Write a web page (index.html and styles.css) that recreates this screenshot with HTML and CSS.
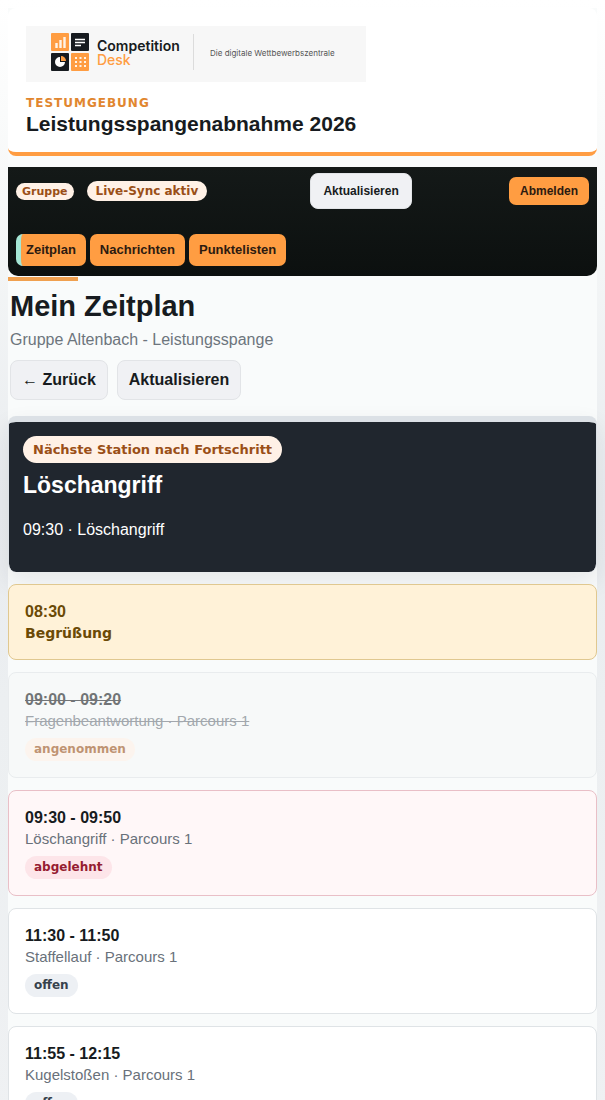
FILE: index.html
```html
<!DOCTYPE html>
<html lang="de">
<head>
    <meta charset="utf-8">
    <meta name="viewport" content="width=device-width, initial-scale=1">
    <link rel="stylesheet" href="styles.css">
    <title>Mein Zeitplan - Competition Desk</title>
</head>
<body>
    <div class="page">
        <header class="event-header">
            <div class="brand">
                <svg class="brand-mark" viewBox="0 0 38 38" aria-hidden="true">
                    <rect width="18" height="18" rx="1" fill="#ff9d42"/>
                    <rect x="20" width="18" height="18" rx="1" fill="#171b20"/>
                    <rect y="20" width="18" height="18" rx="1" fill="#171b20"/>
                    <rect x="20" y="20" width="18" height="18" rx="1" fill="#ff9d42"/>
                    <path d="M5.500 15V10M9.500 15V7M13.500 15V4" stroke="#fff4e8" stroke-width="2.400"/>
                    <path d="M24 6.500h10M24 9.500h10M24 12.500h6" stroke="#fff" stroke-width="1.400"/>
                    <path d="M9 24v5h5a5 5 0 1 1-5-5z" fill="#fff"/>
                    <path d="M10 23a5 5 0 0 1 5 5h-5z" fill="#ff9d42"/>
                    <path d="M24 25h11M24 29h11M24 33h11" stroke="#fff4e8" stroke-width="2" stroke-dasharray="2 2.500"/>
                </svg>
                <div class="brand-name">Competition<span>Desk</span></div>
                <div class="brand-claim">Die digitale Wettbewerbszentrale</div>
            </div>
            <div class="environment">TESTUMGEBUNG</div>
            <div class="event-title">Leistungsspangenabnahme 2026</div>
        </header>

        <nav class="topbar">
            <div class="topbar-row">
                <div class="status">
                    <span class="pill pill-role">Gruppe</span>
                    <span class="pill pill-sync">Live-Sync aktiv</span>
                </div>
                <button type="button" class="btn btn-small">Aktualisieren</button>
                <button type="button" class="btn-logout">Abmelden</button>
            </div>
            <div class="tabs">
                <a href="#zeitplan" class="tab active">Zeitplan</a>
                <a href="#nachrichten" class="tab">Nachrichten</a>
                <a href="#punktelisten" class="tab">Punktelisten</a>
            </div>
        </nav>

        <main id="zeitplan">
            <div class="page-head">
                <h1>Mein Zeitplan</h1>
                <p class="subtitle">Gruppe Altenbach - Leistungsspange</p>
                <div class="actions">
                    <button type="button" class="btn">← Zurück</button>
                    <button type="button" class="btn">Aktualisieren</button>
                </div>
            </div>

            <section class="next-station">
                <span class="pill pill-next">Nächste Station nach Fortschritt</span>
                <h2>Löschangriff</h2>
                <p>09:30 · Löschangriff</p>
            </section>

            <div class="schedule">
                <article class="slot slot-general">
                    <div class="time">08:30</div>
                    <div class="general-title">Begrüßung</div>
                </article>
                <article class="slot slot-done">
                    <div class="time">09:00 - 09:20</div>
                    <div class="station">Fragenbeantwortung · Parcours 1</div>
                    <span class="badge badge-accepted">angenommen</span>
                </article>
                <article class="slot slot-rejected">
                    <div class="time">09:30 - 09:50</div>
                    <div class="station">Löschangriff · Parcours 1</div>
                    <span class="badge badge-rejected">abgelehnt</span>
                </article>
                <article class="slot">
                    <div class="time">11:30 - 11:50</div>
                    <div class="station">Staffellauf · Parcours 1</div>
                    <span class="badge">offen</span>
                </article>
                <article class="slot">
                    <div class="time">11:55 - 12:15</div>
                    <div class="station">Kugelstoßen · Parcours 1</div>
                    <span class="badge">offen</span>
                </article>
            </div>
        </main>
    </div>
</body>
</html>
```

FILE: styles.css
```css
* {
    box-sizing: border-box;
}

body {
    margin: 0;
    padding: 8px;
    font-family: "Liberation Sans", Arial, sans-serif;
    font-size: 16px;
    color: #171b20;
    background: linear-gradient(#ffffff 0, #f6f8f8 200px, #e9ecef 500px, #eceff1 700px, #eff1f3 100%);
}

h1, h2, p {
    margin: 0;
}

button {
    font-family: inherit;
    cursor: pointer;
}

.page {
    background: #f9fbfb;
}

/* header */

.event-header {
    padding: 18px 18px 16px;
    background: #fff;
    border-bottom: 4px solid #ff9d42;
    border-radius: 8px;
}

.brand {
    display: flex;
    align-items: center;
    max-width: 340px;
    height: 56px;
    padding: 0 25px;
    background: #f7f7f7;
}

.brand-mark {
    flex-shrink: 0;
    width: 38px;
    height: 38px;
    margin-bottom: 4px;
}

.brand-name {
    width: 96px;
    margin-bottom: 2px;
    padding-left: 8px;
    font-family: Inter, sans-serif;
    font-size: 14px;
    line-height: 14px;
    font-weight: 600;
}

.brand-name span {
    display: block;
    font-weight: 500;
    color: #ff9d42;
}

.brand-claim {
    height: 36px;
    margin: 0 0 4px 8px;
    padding-left: 16px;
    border-left: 1px solid #dcdcdc;
    font-family: Inter, sans-serif;
    font-size: 8px;
    line-height: 38px;
    color: #555;
    white-space: nowrap;
}

.environment {
    margin-top: 14px;
    font-family: "DejaVu Sans", sans-serif;
    font-size: 12px;
    line-height: 15px;
    font-weight: bold;
    letter-spacing: 1px;
    color: #e1862f;
}

.event-title {
    font-size: 21px;
    line-height: 25px;
    font-weight: bold;
}

/* navigation */

.topbar {
    margin-top: 11px;
    padding: 6px 8px 10px;
    background: linear-gradient(#141918, #0c100f);
    border-radius: 0 0 10px 10px;
}

.topbar-row {
    display: flex;
    align-items: center;
    justify-content: space-between;
}

.status {
    display: flex;
    align-items: center;
    gap: 13px;
    padding-right: 6px;
}

.pill {
    display: inline-block;
    font-family: "DejaVu Sans", sans-serif;
    font-weight: bold;
    color: #9a4f17;
    background: #fff1e6;
    border-radius: 99px;
    white-space: nowrap;
}

.pill-role {
    padding: 0 6px;
    font-size: 11px;
    line-height: 17px;
}

.pill-sync {
    padding: 0 9px;
    font-size: 12px;
    line-height: 20px;
}

.pill-next {
    padding: 0 10px;
    font-size: 13px;
    line-height: 27px;
}

.btn {
    height: 40px;
    padding: 0 11px;
    font-size: 16px;
    font-weight: bold;
    color: #171b20;
    background: #f0f1f4;
    border: 1px solid #e2e4e7;
    border-radius: 8px;
}

.btn-small {
    height: 36px;
    padding: 0 12px;
    font-size: 12px;
}

.btn-logout {
    height: 28px;
    padding: 0 11px;
    font-size: 12px;
    font-weight: bold;
    color: #2c1a10;
    background: #ff9d42;
    border: 0;
    border-radius: 7px;
}

.tabs {
    display: flex;
    gap: 4px;
    margin-top: 25px;
}

.tab {
    padding: 0 10px;
    font-size: 13px;
    line-height: 32px;
    font-weight: bold;
    color: #2c1a10;
    text-decoration: none;
    background: #ff9d42;
    border-radius: 7px;
}

.tab.active {
    padding-left: 5px;
    border-left: 5px solid #a5e6d5;
}

/* page title */

.page-head {
    padding: 0 2px;
}

.page-head::before {
    content: "";
    display: block;
    width: 70px;
    height: 4px;
    margin: 0 -2px;
    background: #f0a04f;
}

main {
    padding-top: 1px;
}

h1 {
    margin-top: 7px;
    font-size: 29px;
    line-height: 36px;
}

.subtitle {
    margin: 6px 0 10px;
    line-height: 20px;
    color: #6d757d;
}

.actions {
    display: flex;
    gap: 9px;
}

/* next station */

.next-station {
    margin-top: 16px;
    padding: 14px 14px 32px;
    color: #fff;
    background: #20262e;
    background-clip: padding-box;
    border: 1px solid #dce1e6;
    border-top-width: 6px;
    border-bottom: 0;
    border-radius: 8px;
    box-shadow: 0 10px 24px rgba(32, 38, 46, 0.09);
}

.next-station h2 {
    margin: 8px 0 21px;
    font-size: 23px;
    line-height: 28px;
}

.next-station p {
    line-height: 20px;
}

/* schedule */

.schedule {
    display: grid;
    gap: 12px;
    margin-top: 12px;
}

.slot {
    padding: 16px;
    background: #fff;
    border: 1px solid #dfe3e6;
    border-radius: 8px;
}

.time {
    line-height: 21px;
    font-weight: bold;
}

.station {
    font-size: 15px;
    line-height: 21px;
    color: #69717a;
}

.slot-general {
    padding-bottom: 14px;
    color: #6b4a06;
    background: #fff2d8;
    border-color: #e0c890;
}

.general-title {
    font-family: "DejaVu Sans", sans-serif;
    font-size: 14px;
    line-height: 23px;
    font-weight: bold;
}

.slot-done {
    background: #f6f9f8;
    opacity: 0.6;
}

.slot-done .time,
.slot-done .station {
    text-decoration: line-through;
}

.slot-rejected {
    background: #fff7f8;
    border-color: #e9bfc7;
}

.badge {
    display: block;
    width: fit-content;
    margin-top: 7px;
    padding: 0 9px;
    font-family: "DejaVu Sans", sans-serif;
    font-size: 12px;
    line-height: 23px;
    font-weight: bold;
    color: #37424c;
    background: #edf0f4;
    border-radius: 99px;
}

.badge-accepted {
    color: #9a4f17;
    background: #fff1e6;
}

.badge-rejected {
    color: #961c31;
    background: #fde5e9;
}
```
